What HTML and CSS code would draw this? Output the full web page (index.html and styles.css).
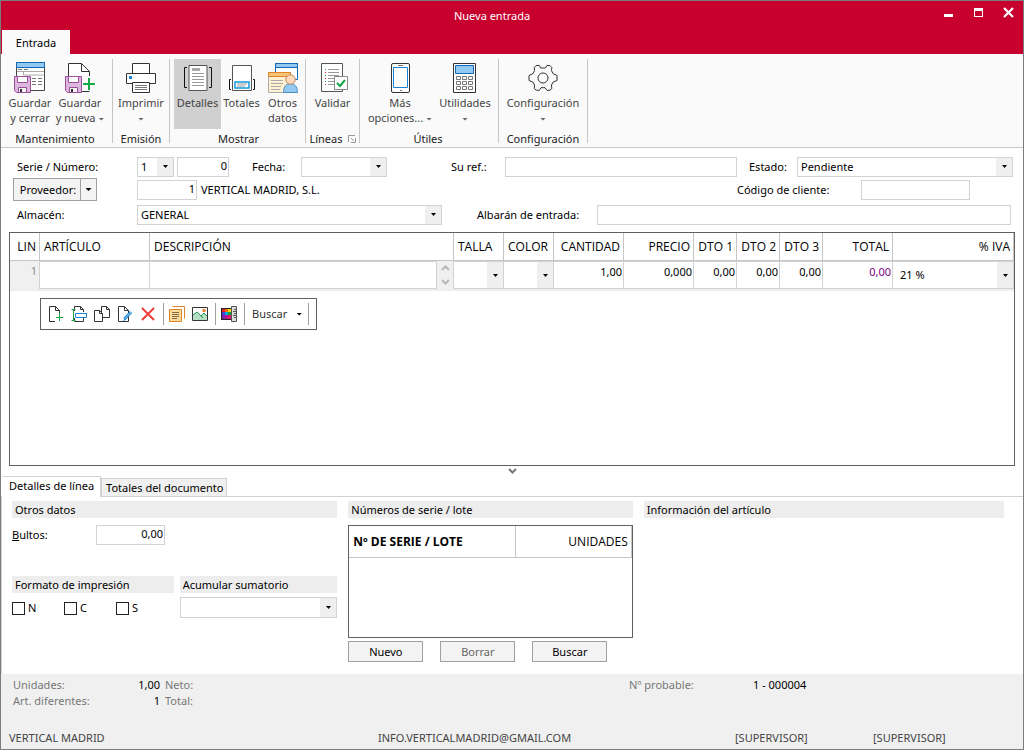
FILE: index.html
```
<!DOCTYPE html>
<html lang="es">
<head>
<meta charset="utf-8">
<title>Nueva entrada</title>
<link rel="stylesheet" href="styles.css">
</head>
<body>
<svg class="defs" aria-hidden="true">
  <symbol id="floppy" viewBox="0 0 17 17">
    <path d="M.5.5h16v16h-14l-2-2z" fill="#dcb6dc" stroke="#9b4f9b"/>
    <path d="M3.500.5h10v6h-10z" fill="#fff" stroke="#9b4f9b"/>
    <path d="M4.500 11.500h8v5h-8z" fill="#f4f4f4" stroke="#9b4f9b"/>
    <path d="M6 13h2v3H6z" fill="#333"/>
  </symbol>
</svg>
<div class="window">
  <header class="titlebar">
    <h1 class="title">Nueva entrada</h1>
    <div class="controls">
      <button class="control" aria-label="Minimizar"><svg width="11" height="11"><path d="M1 7h9v3H1z" fill="#fff"/></svg></button>
      <button class="control" aria-label="Maximizar"><svg width="11" height="11"><path d="M1 1h9v9H1zM2 4v5h7V4z" fill="#fff" fill-rule="evenodd"/></svg></button>
      <button class="control" aria-label="Cerrar"><svg width="11" height="11"><path d="M1 1l9 9M10 1l-9 9" stroke="#fff" stroke-width="2.200"/></svg></button>
    </div>
  </header>
  <nav class="ribbon-tabs"><a class="ribbon-tab" href="#ribbon">Entrada</a></nav>

  <section class="ribbon" id="ribbon">
    <div class="group">
      <div class="group-buttons">
        <button class="tool w-medium">
          <svg class="icon" viewBox="0 0 32 32"><path d="M2.500 1.500h28v28h-28z" fill="#fff" stroke="#444"/><path d="M2.500 1.500h28v5h-28z" fill="#92c9f2" stroke="#1468b3"/><path d="M4 8.500h4m2 0h4M18 17.500h4m2 0h4M18 20.500h4m2 0h4M18 23.500h4m2 0h4" stroke="#777" fill="none"/><path d="M3 10.500h27M9.500 11v3h20" fill="none" stroke="#aaa"/><use href="#floppy" x="0" y="15" width="17" height="17"/></svg>
          <span>Guardar<br>y cerrar</span></button>
        <button class="tool w-medium">
          <svg class="icon" viewBox="0 0 32 32"><path d="M4.500 2.500h13l8 8v20h-21z" fill="#fff" stroke="#333"/><path d="M17.500 2.500v8h8" fill="none" stroke="#333"/><path d="M19 15h13v16H19z" fill="#fafafa"/><path d="M19 30.500h6.500" stroke="#333"/><path d="M25 17v12M19 23h12" stroke="#14a84b" stroke-width="2"/><use href="#floppy" x="1" y="15" width="17" height="17"/></svg>
          <span>Guardar<br>y nueva <i class="caret"></i></span></button>
      </div>
      <div class="group-name">Mantenimiento</div>
    </div>
    <div class="group">
      <div class="group-buttons">
        <button class="tool w-medium">
          <svg class="icon" viewBox="0 0 32 32"><g fill="#fff" stroke="#333"><path d="M7.500 2.500h17v10h-17z"/><path d="M1.500 12.500h29v10h-29z"/><path d="M7.500 21.500h17v10h-17z"/></g><path d="M4 15h3v3H4z" fill="#1883d7"/><path d="M10 24.500h12M10 26.500h12M10 28.500h12" stroke="#777"/></svg>
          <span>Imprimir<br><i class="caret"></i></span></button>
      </div>
      <div class="group-name">Emisión</div>
    </div>
    <div class="group views">
      <div class="group-buttons">
        <button class="tool selected w-normal" aria-pressed="true">
          <svg class="icon" viewBox="0 0 32 32"><path d="M7 4.500h18v25H7z" fill="#fff" stroke="#555"/><path d="M10 7h8v3h-8z" fill="#aaa"/><path d="M10 12.500h12M10 15.500h12M10 18.500h12M10 21.500h12M10 24.500h12" stroke="#999"/><path d="M5 6.500H2.500v20H5M27 6.500h2.500v20H27" fill="none" stroke="#111"/></svg>
          <span>Detalles</span></button>
        <button class="tool w-small">
          <svg class="icon" viewBox="0 0 32 32"><path d="M6.500 4.500h19v25h-19z" fill="#fff" stroke="#555"/><path d="M9 21h14v6H9z" fill="#fff" stroke="#0e9be0" stroke-width="1.500"/><path d="M11 23h10M11 25h8" stroke="#999"/><path d="M5 18.500H3.500v10H5M27 18.500h1.500v10H27" fill="none" stroke="#111"/></svg>
          <span>Totales</span></button>
        <button class="tool w-small">
          <svg class="icon" viewBox="0 0 32 32"><path d="M8.500 2.500h22v16h-22z" fill="#fff" stroke="#1468b3"/><path d="M8.500 2.500h22v4h-22z" fill="#92c9f2" stroke="#1468b3"/><path d="M1.500 11.500h22v20h-22z" fill="#fff0d2" stroke="#aaa"/><path d="M1.500 11.500h22v4h-22z" fill="#f6c475" stroke="#e08428"/><path d="M4 19.500h12M4 22.500h12M4 25.500h10M4 28.500h9" stroke="#aaa"/><path d="M16.500 31.500c0-6 3-9 7-9s7 3 7 9z" fill="#92c9f2" stroke="#4c8dc0"/><circle cx="23.500" cy="18.500" r="4.700" fill="#ffd9bb" stroke="#b98762"/></svg>
          <span>Otros<br>datos</span></button>
      </div>
      <div class="group-name">Mostrar</div>
    </div>
    <div class="group">
      <div class="group-buttons">
        <button class="tool w-normal">
          <svg class="icon" viewBox="0 0 32 32"><path d="M4.500 2.500h21v28h-21z" fill="#fff" stroke="#555"/><path d="M11 8.500h11M11 11.500h11M11 14.500h11M11 17.500h7M11 20.500h7M11 23.500h7" stroke="#999"/><path d="M8 8.500h1M8 14.500h1M8 20.500h1" stroke="#14a84b"/><path d="M8 11.500h1M8 17.500h1M8 23.500h1" stroke="#d02030"/><path d="M17.500 15.500h13v13h-13z" fill="#fff" stroke="#888"/><path d="M20 22l3 3 5-6" fill="none" stroke="#14a84b" stroke-width="2"/></svg>
          <span>Validar</span></button>
      </div>
      <div class="group-name">Líneas <svg class="launcher" viewBox="0 0 8 8"><path d="M.5 7V.5H7M3 3l3 3M7.500 3v4.500H3" fill="none" stroke="#999"/></svg></div>
    </div>
    <div class="group utilities">
      <div class="group-buttons">
        <button class="tool w-options">
          <svg class="icon" viewBox="0 0 32 32"><rect x="7.500" y="2.500" width="18" height="29" rx="1.500" fill="#fff" stroke="#333"/><path d="M9.500 6.500h14v20h-14z" fill="#fff" stroke="#1883d7"/><path d="M14 4.500h5M16 29.500h2" stroke="#777"/></svg>
          <span>Más<br>opciones... <i class="caret"></i></span></button>
        <button class="tool w-utilities">
          <svg class="icon" viewBox="0 0 32 32"><path d="M4.500 2.500h22v29h-22z" fill="#fff" stroke="#333"/><path d="M6.500 4.500h18v8h-18z" fill="#92c9f2" stroke="#1468b3"/><path d="M7.500 15.500h4v3h-4zM13.500 15.500h4v3h-4zM19.500 15.500h4v3h-4zM7.500 20.500h4v3h-4zM13.500 20.500h4v3h-4zM19.500 20.500h4v3h-4zM7.500 25.500h4v3h-4zM13.500 25.500h4v3h-4zM19.500 25.500h4v3h-4z" fill="#fff" stroke="#777"/></svg>
          <span>Utilidades<br><i class="caret"></i></span></button>
      </div>
      <div class="group-name">Útiles</div>
    </div>
    <div class="group settings">
      <div class="group-buttons">
        <button class="tool w-large">
          <svg class="icon" viewBox="0 0 32 32"><path d="M13.600 7l-1.300-2.600-3.300.2-1.700 1.800.2 3.300-1.700 3-3.800 1.800v5l3.800 1.500 1.700 3-.2 3.600 1.900 1.600 3 .2L14 26.700h4l2 2.700 3-.2 1.800-1.600-.3-3.600 1.700-3 3.800-1.500v-5L26.200 12.700l-1.700-3 .3-3.300-1.800-1.800-3-.2L18.400 7z" fill="#fafafa" stroke="#333" stroke-linejoin="round"/><circle cx="16" cy="17" r="5" fill="#fff" stroke="#333"/></svg>
          <span>Configuración<br><i class="caret"></i></span></button>
      </div>
      <div class="group-name">Configuración</div>
    </div>
  </section>

  <form class="form" id="entry">
    <div class="row">
      <label class="lead" for="serie">Serie / Número:</label>
      <select class="field select serie" id="serie"><option>1</option></select>
      <input class="field num numero" aria-label="Número" value="0">
      <label class="fecha-label" for="fecha">Fecha:</label>
      <select class="field select fecha" id="fecha"><option></option></select>
      <label class="ref-label" for="ref">Su ref.:</label>
      <input class="field ref" id="ref">
      <label class="estado-label" for="estado">Estado:</label>
      <select class="field select estado" id="estado"><option>Pendiente</option></select>
    </div>
    <div class="row">
      <div class="supplier">
        <div class="split"><button type="button" class="split-main">Proveedor:</button><button type="button" class="split-arrow" aria-label="Opciones de proveedor"><i class="caret dark"></i></button></div>
      </div>
      <input class="field num proveedor" aria-label="Proveedor" value="1">
      <output class="supplier-name">VERTICAL MADRID, S.L.</output>
      <label class="codigo-label" for="codigo">Código de cliente:</label>
      <input class="field codigo" id="codigo">
    </div>
    <div class="row">
      <label class="lead" for="almacen">Almacén:</label>
      <select class="field select almacen" id="almacen"><option>GENERAL</option></select>
      <label class="albaran-label" for="albaran">Albarán de entrada:</label>
      <input class="field albaran" id="albaran">
    </div>
  </form>

  <section class="lines">
    <table class="lines-table">
      <colgroup><col class="c-lin"><col class="c-art"><col><col class="c-talla"><col class="c-talla"><col class="c-amount"><col class="c-amount"><col class="c-dto"><col class="c-dto"><col class="c-dto"><col class="c-amount"><col class="c-iva"></colgroup>
      <thead><tr><th class="right">LIN</th><th>ARTÍCULO</th><th>DESCRIPCIÓN</th><th>TALLA</th><th>COLOR</th><th class="right">CANTIDAD</th><th class="right">PRECIO</th><th class="right">DTO 1</th><th class="right">DTO 2</th><th class="right">DTO 3</th><th class="right">TOTAL</th><th class="right">% IVA</th></tr></thead>
      <tbody><tr>
        <td class="line-number">1</td>
        <td><input class="cell" aria-label="Artículo"></td>
        <td><div class="description"><textarea class="cell" aria-label="Descripción"></textarea><div class="scroller" aria-hidden="true"><svg width="9" height="6"><path d="M1 5l3.500-3.500L8 5" fill="none" stroke="#b8b8b8" stroke-width="2"/></svg><svg width="9" height="6"><path d="M1 1l3.500 3.500L8 1" fill="none" stroke="#b8b8b8" stroke-width="2"/></svg></div></div></td>
        <td><select class="cell select" aria-label="Talla"><option></option></select></td>
        <td><select class="cell select" aria-label="Color"><option></option></select></td>
        <td><input class="cell cell-num" aria-label="Cantidad" value="1,00"></td>
        <td><input class="cell cell-num" aria-label="Precio" value="0,000"></td>
        <td><input class="cell cell-num" aria-label="Dto 1" value="0,00"></td>
        <td><input class="cell cell-num" aria-label="Dto 2" value="0,00"></td>
        <td><input class="cell cell-num" aria-label="Dto 3" value="0,00"></td>
        <td><input class="cell cell-num total" aria-label="Total" value="0,00" readonly></td>
        <td><select class="cell select iva" aria-label="% IVA"><option>21 %</option></select></td>
      </tr></tbody>
    </table>
    <div class="toolbar" role="toolbar" aria-label="Línea">
      <button class="mini" aria-label="Nueva línea"><svg viewBox="0 0 16 16"><path d="M7 15.500H1.500V.5h6l4 4V7M7.500.5v4h4" fill="none" stroke="#333"/><path d="M11.500 7v8M8 11.500h7" stroke="#14a84b"/></svg></button>
      <button class="mini" aria-label="Insertar línea"><svg viewBox="0 0 16 16"><path d="M3.500 5V.5h6l3 3V6M9.500.5v3h3M3.500 12v3.500h9V12" fill="none" stroke="#333"/><path d="M4.500 7.500h11v4h-11z" fill="#fff" stroke="#1883d7"/><path d="M.5 3.500h4M.5 14.500h4M2.500 3v12" stroke="#14a84b"/></svg></button>
      <button class="mini" aria-label="Duplicar línea"><svg viewBox="0 0 16 16"><path d="M7.500.5h5l3 3v8h-8zM12.500.5v3h3" fill="#fff" stroke="#333"/><path d="M.5 4.500h5l3 3v8h-8zM5.500 4.500v3h3" fill="#fff" stroke="#333"/></svg></button>
      <button class="mini" aria-label="Editar línea"><svg viewBox="0 0 16 16"><path d="M1.500.5h6l4 4v11h-10zM7.500.5v4h4" fill="#fff" stroke="#333"/><path d="M14 6l-6.500 7" stroke="#2b88d0" stroke-width="3"/><path d="M14 6l-6.500 7" stroke="#8cc8f4"/><path d="M8 12l-2 3 3-1" fill="#2b88d0"/></svg></button>
      <button class="mini" aria-label="Borrar línea"><svg viewBox="0 0 16 16"><path d="M2 2l12 12M14 2L2 14" stroke="#ee3e3e" stroke-width="2"/></svg></button>
      <span class="divider"></span>
      <button class="mini" aria-label="Textos"><svg viewBox="0 0 16 16"><path d="M3.500.5h12v12" fill="none" stroke="#e08428"/><path d="M.5 3.500h12v12H.5z" fill="#fbdc9c" stroke="#e08428"/><path d="M3 6.500h7M3 8.500h7M3 10.500h7M3 12.500h5" stroke="#8a6b3d"/></svg></button>
      <button class="mini" aria-label="Imagen"><svg viewBox="0 0 16 16"><path d="M.5 1.500h15v13H.5z" fill="#fff" stroke="#333"/><path d="M1 9l4-3 4 4 3-3 3 3v4H1z" fill="#b5dfc4"/><path d="M1 9l4-3 6 6M9 10l3-3 3 3" fill="none" stroke="#249454"/><circle cx="12" cy="4.500" r="1.800" fill="#ee8434"/></svg></button>
      <span class="divider"></span>
      <button class="mini" aria-label="Tallas y colores"><svg viewBox="0 0 16 16"><path d="M0 2h11v12H0z" fill="#222"/><path d="M1 3h3v3H1z" fill="#e02020"/><path d="M4 3h3v3H4z" fill="#f07000"/><path d="M7 3h3v3H7z" fill="#ffd800"/><path d="M1 6h3v3H1z" fill="#4444d8"/><path d="M4 6h3v3H4z" fill="#00a8e0"/><path d="M7 6h3v3H7z" fill="#18a030"/><path d="M1 9h3v4H1z" fill="#8020a8"/><path d="M4 9h3v4H4z" fill="#b01890"/><path d="M7 9h3v4H7z" fill="#e01868"/><path d="M10.500.5h5v15h-5z" fill="#ddd" stroke="#555"/><path d="M13 3.500h2M12 5.500h3M13 7.500h2M12 9.500h3M13 11.500h2" stroke="#555"/></svg></button>
      <span class="divider"></span>
      <button class="search">Buscar <i class="caret dark"></i></button>
      <span class="divider"></span>
    </div>
  </section>
  <button class="splitter" aria-label="Plegar detalles"><svg width="9" height="6"><path d="M1 1l3.500 3.500L8 1" fill="none" stroke="#777" stroke-width="2"/></svg></button>

  <nav class="tabs">
    <a class="tab current" href="#details">Detalles de línea</a>
    <a class="tab" href="#totals">Totales del documento</a>
  </nav>
  <section class="details" id="details">
    <div class="column">
      <h2 class="heading">Otros datos</h2>
      <div class="bultos"><label for="bultos"><u>B</u>ultos:</label><input class="field num" id="bultos" value="0,00"></div>
      <div class="pair">
        <div class="column">
          <h2 class="heading">Formato de impresión</h2>
          <div class="checks">
            <label class="check"><input type="checkbox">N</label>
            <label class="check"><input type="checkbox">C</label>
            <label class="check"><input type="checkbox">S</label>
          </div>
        </div>
        <div class="column">
          <h2 class="heading">Acumular sumatorio</h2>
          <select class="field select sumatorio" aria-label="Acumular sumatorio"><option></option></select>
        </div>
      </div>
    </div>
    <div class="column">
      <h2 class="heading">Números de serie / lote</h2>
      <div class="serials">
        <table class="serials-table"><thead><tr><th class="bold">Nº DE SERIE / LOTE</th><th class="right">UNIDADES</th></tr></thead></table>
      </div>
      <div class="actions">
        <button class="action">Nuevo</button>
        <button class="action" disabled>Borrar</button>
        <button class="action">Buscar</button>
      </div>
    </div>
    <div class="column">
      <h2 class="heading">Información del artículo</h2>
    </div>
  </section>

  <section class="summary" id="totals">
    <dl class="figures">
      <dt>Unidades:</dt><dd>1,00</dd><dt>Neto:</dt><dd></dd>
      <dt>Art. diferentes:</dt><dd>1</dd><dt>Total:</dt><dd></dd>
    </dl>
    <dl class="probable"><dt>Nº probable:</dt><dd>1 - 000004</dd></dl>
  </section>
  <footer class="status">
    <span>VERTICAL MADRID</span><span>INFO.VERTICALMADRID@GMAIL.COM</span><span>[SUPERVISOR]</span><span>[SUPERVISOR]</span>
  </footer>
</div>
</body>
</html>
```
FILE: styles.css
```
* { box-sizing: border-box; }

body {
  margin: 0;
  color: #000;
  font: 11px/16px "Noto Sans", "Open Sans", sans-serif;
}

button, input, select, textarea { margin: 0; color: inherit; font: inherit; }
button { padding: 0; border: 0; background: none; }
a { color: inherit; text-decoration: none; }
label { white-space: nowrap; }
svg { display: block; }
.defs { position: absolute; width: 0; height: 0; }

.window {
  display: flex;
  flex-direction: column;
  min-height: 100vh;
  border: 1px solid #7c7c7c;
  background: #fff;
}

.caret {
  display: inline-block;
  width: 6px;
  height: 3px;
  background: #666;
  clip-path: polygon(0 0, 100% 0, 50% 100%);
  vertical-align: middle;
}
.caret.dark { background: #000; }

/* Title bar */
.titlebar { display: flex; height: 29px; background: #c8002d; color: #fff; }
.title { flex: 1; margin: 0; padding-left: 40px; font-size: 11px; font-weight: 400; line-height: 30px; text-align: center; }
.controls { display: flex; gap: 19px; align-items: flex-start; padding: 6px 9px 0 0; }
.ribbon-tabs { display: flex; height: 24px; padding-left: 1px; background: #c8002d; }
.ribbon-tab { width: 68px; background: #fafafa; line-height: 26px; text-align: center; }

/* Ribbon */
.ribbon { display: flex; height: 94px; padding: 5px 0 4px; border-bottom: 1px solid #c6c6c6; background: #fafafa; }
.group { display: flex; flex-direction: column; padding: 0 3px; border-right: 1px solid #c6c6c6; }
.group:first-child { padding: 0 7px 0 4px; }
.views { padding-left: 4px; padding-right: 2px; }
.utilities { padding-right: 5px; }
.settings { padding: 0 4px; }
.group-buttons { display: flex; flex: 1; }
.group-name { display: flex; gap: 5px; align-items: center; justify-content: center; height: 8px; color: #222; line-height: 8px; }
.tool { display: flex; flex-direction: column; gap: 2px; align-items: center; height: 70px; padding-top: 2px; color: #444; line-height: 15px; white-space: nowrap; }
.tool.selected { background: #d0d0d0; }
.w-small { width: 41px; }
.w-normal { width: 47px; }
.w-medium { width: 50px; }
.w-utilities { width: 56px; }
.w-options { width: 74px; }
.w-large { width: 80px; }
.icon { flex: none; width: 32px; height: 32px; }
.launcher { width: 8px; height: 8px; }

/* Header form */
.form { display: flex; flex-direction: column; gap: 2px; padding: 8px 10px 7px 16px; }
.row { display: flex; align-items: center; height: 21px; }
.row:last-child { margin-top: 2px; }
.lead, .supplier { flex: none; width: 120px; }
.field { height: 20px; min-width: 0; padding: 0 3px; border: 1px solid #d2d2d2; border-radius: 0; background-color: #fff; outline: 0; }
.num { padding: 0 1px 3px; text-align: right; }
.select {
  appearance: none;
  background-image:
    url("data:image/svg+xml,%3Csvg xmlns='http://www.w3.org/2000/svg' width='5' height='3'%3E%3Cpath d='M0 0h5L2.5 3z'/%3E%3C/svg%3E"),
    linear-gradient(#efefef, #efefef);
  background-position: right 5px center, right center;
  background-repeat: no-repeat;
  background-size: 5px 3px, 16px 100%;
}
.serie { width: 37px; }
.numero { width: 52px; margin-left: 3px; }
.fecha-label { width: 49px; margin-left: 23px; }
.fecha { width: 86px; }
.ref-label { width: 54px; margin-left: 64px; }
.ref { flex: 1; }
.estado-label { width: 48px; margin-left: 12px; }
.estado { flex: 1; max-width: 216px; }
.split { display: flex; width: 84px; height: 23px; margin-left: -4px; border: 1px solid #a0a0a0; background: #f3f3f3; }
.split-main { flex: 1; padding-left: 2px; }
.split-arrow { display: flex; align-items: center; justify-content: center; width: 16px; border-left: 1px solid #a0a0a0; }
.proveedor { width: 60px; }
.supplier-name { flex: 1; margin-left: 4px; }
.codigo-label { width: 124px; }
.codigo { width: 109px; margin-right: 43px; }
.almacen { width: 305px; }
.albaran-label { width: 120px; margin-left: 35px; }
.albaran { flex: 1; margin-right: 2px; }

/* Document lines */
.lines { flex: 1; margin: 0 8px; border: 1px solid #606060; }
.lines-table { width: 100%; border-spacing: 0; border-bottom: 2px solid #eee; table-layout: fixed; }
th { padding: 0 4px; border: 0 solid #c6c6c6; border-width: 0 1px 1px 0; font-family: "Open Sans", "Noto Sans", sans-serif; font-size: 12px; font-weight: 400; text-align: left; white-space: nowrap; }
th.right { padding-right: 3px; text-align: right; }
.lines-table th { height: 28px; }
.lines-table td { height: 28px; padding: 0; border-right: 1px solid #d2d2d2; vertical-align: top; }
.c-lin { width: 30px; }
.c-art { width: 110px; }
.c-talla { width: 50px; }
.c-amount { width: 70px; }
.c-dto { width: 43px; }
.c-iva { width: 121px; }
.lines-table .line-number { padding: 2px 2px 0 0; background: #f0f0f0; color: #888; text-align: right; }
.cell { display: block; width: 100%; height: 28px; padding: 0 5px; border: 1px solid #d2d2d2; border-width: 1px 0; border-radius: 0; background-color: #fff; outline: 0; resize: none; }
.cell-num { padding: 0 1px 8px; text-align: right; }
.total { color: #800080; }
.iva { padding-left: 7px; }
.description { display: flex; }
.description .cell { flex: 1; border-right-width: 1px; }
.scroller { display: flex; flex-direction: column; align-items: center; justify-content: space-between; width: 16px; padding: 4px 0; background: #f0f0f0; }

.toolbar { display: flex; align-items: center; width: fit-content; height: 32px; margin: 7px 0 0 30px; padding: 0 7px; border: 1px solid #606060; }
.mini { width: 23px; height: 20px; padding: 2px 7px 2px 0; }
.mini svg { width: 16px; height: 16px; }
.divider { width: 1px; height: 22px; margin-right: 5px; background: #a0a0a0; }
.divider:last-child { margin-right: 0; }
.search { display: flex; gap: 9px; align-items: center; padding: 0 6px 0 2px; color: #333; }
.splitter { display: flex; align-items: center; justify-content: center; height: 10px; }

/* Lower panel */
.tabs { display: flex; align-items: flex-end; height: 21px; padding-left: 1px; border-bottom: 1px solid #d2d2d2; }
.tab { height: 18px; padding: 0 3px 0 4px; border: 1px solid #d2d2d2; border-bottom: 0; background: #f0f0f0; line-height: 18px; white-space: nowrap; }
.current { height: 21px; margin-bottom: -1px; padding: 0 6px 0 7px; border-left: 0; background: #fff; }
.details { display: grid; grid-template-columns: 326fr 285fr 361fr; gap: 11px; min-height: 177px; padding: 4px 19px 11px 10px; border-left: 1px solid #d2d2d2; }
.column { display: flex; flex-direction: column; min-width: 0; }
.heading { height: 17px; margin: 0; padding: 0 3px; background: #ededed; font-size: 11px; font-weight: 400; line-height: 18px; }
.bultos { display: flex; align-items: center; height: 20px; margin: 7px 0 31px; }
.bultos label { width: 84px; }
.bultos .field { width: 69px; }
.pair { display: grid; grid-template-columns: 162fr 158fr; gap: 6px; }
.checks { display: flex; gap: 10px; padding-top: 7px; }
.check { display: flex; gap: 3px; align-items: center; width: 42px; }
.check input { appearance: none; width: 13px; height: 13px; margin: 0; border: 1px solid #222; background: #fff; }
.sumatorio { height: 21px; margin-top: 4px; }
.serials { height: 113px; margin-top: 7px; border: 1px solid #606060; }
.serials-table { width: 100%; border-spacing: 0; table-layout: fixed; }
.serials-table th { height: 32px; }
.serials-table .bold { width: 59%; font-weight: 700; }
.actions { display: flex; gap: 17px; margin-top: 3px; }
.action { width: 75px; height: 21px; border: 1px solid #a0a0a0; background: #f3f3f3; }
.action:disabled { color: #666; }

/* Totals and status */
.summary, .status { background: #f0f0f0; }
.summary { display: grid; grid-template-columns: 628fr 394fr; padding-top: 3px; height: 53px; }
dl, dd { margin: 0; }
dt { color: #777; }
.figures { display: grid; grid-template-columns: 100px 48px 60px 80px; grid-auto-rows: 16px; padding-left: 12px; }
.figures dd { padding-right: 1px; text-align: right; }
.figures dd + dt { padding-left: 4px; }
.figures dt:nth-of-type(3) { padding-left: 0; }
.probable { display: flex; }
.probable dt { width: 124px; }
.status { display: grid; grid-template-columns: 369fr 357fr 138fr 142fr; height: 22px; padding: 3px 8px; color: #444; }
```
